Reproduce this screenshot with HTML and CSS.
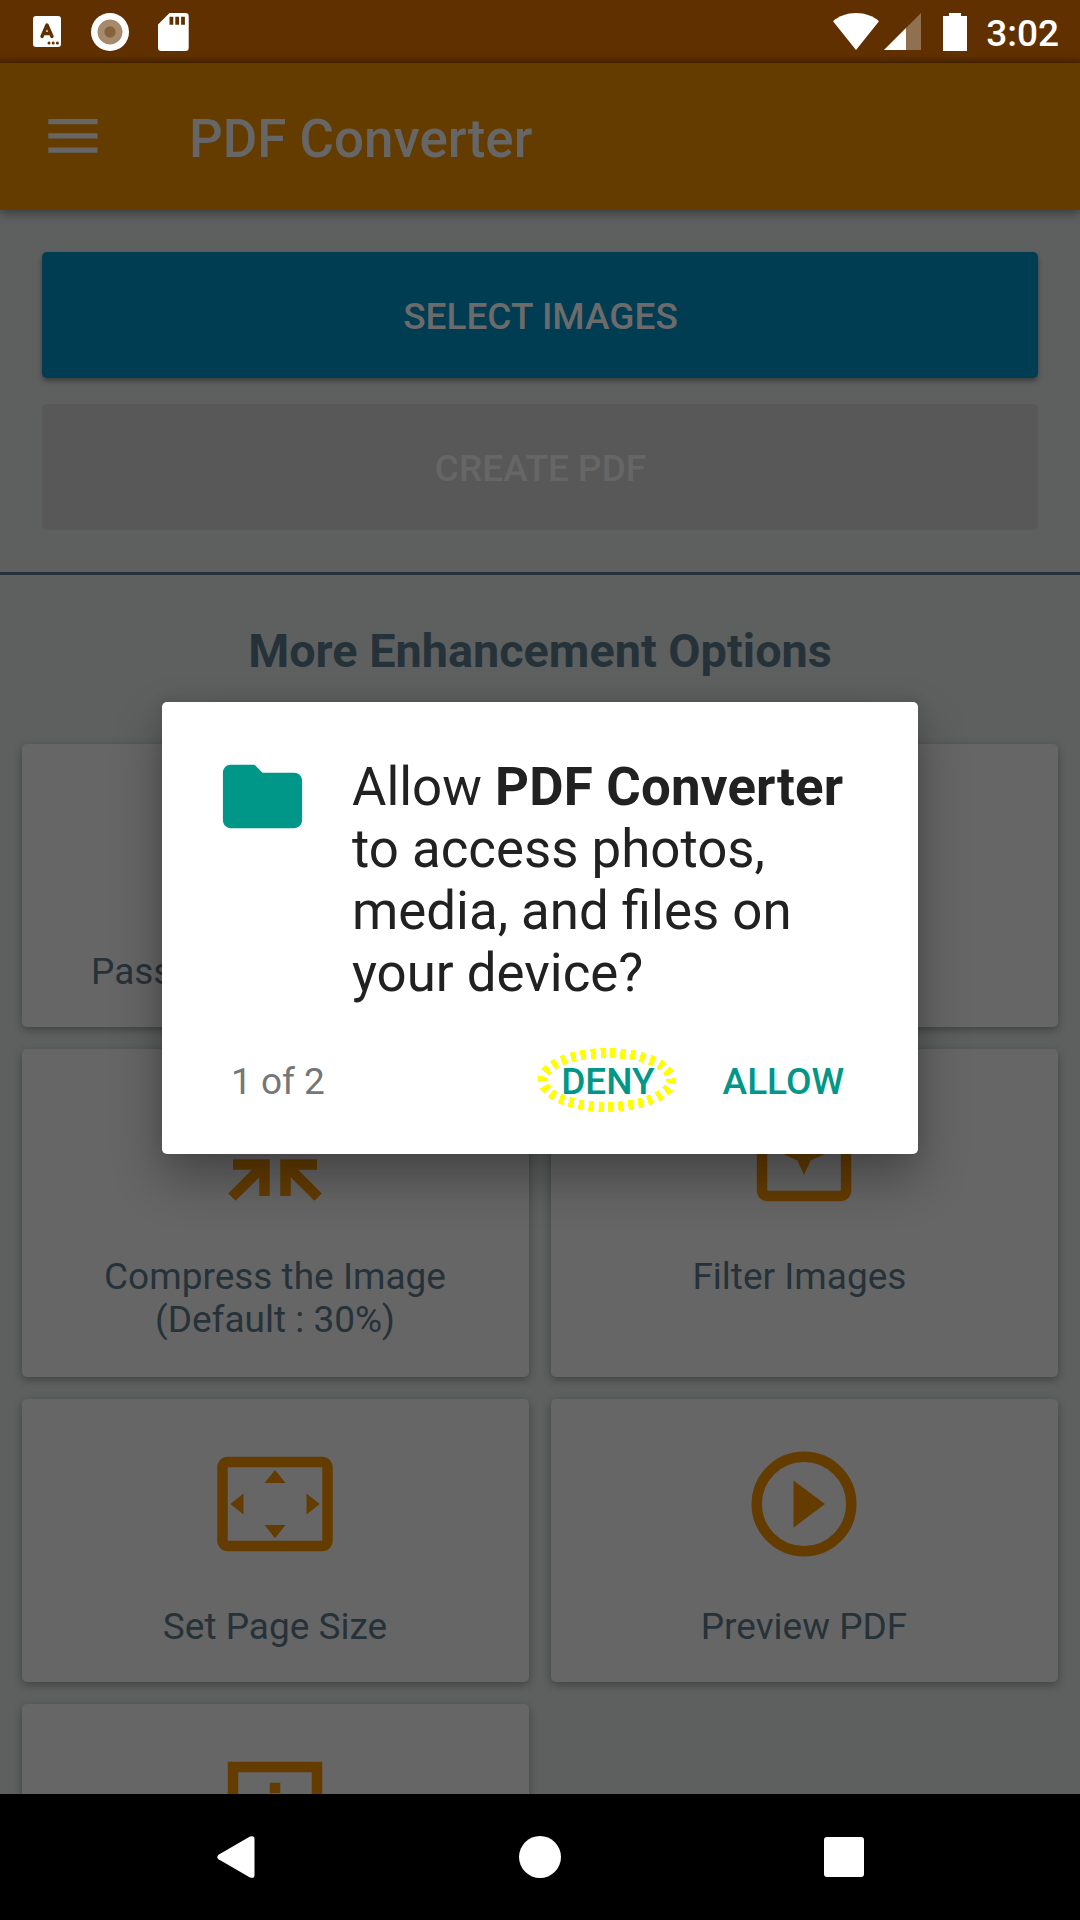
FILE: index.html
```html
<!DOCTYPE html>
<html lang="en">
<head>
<meta charset="utf-8">
<title>PDF Converter</title>
<link rel="stylesheet" href="styles.css">
</head>
<body>
<div class="screen">
  <header class="status-bar">
    <svg class="status-keyboard" width="28" height="31" viewBox="0 0 28 31"><rect width="28" height="31" rx="3" fill="#fff"/><path d="M9 20.500L14 9l5 11.500M10.500 17.500h7" fill="none" stroke="#603000" stroke-width="3.400" stroke-linecap="round" stroke-linejoin="round"/><g fill="#603000"><circle cx="16" cy="27" r="1.500"/><circle cx="20.200" cy="27" r="1.500"/><circle cx="24.400" cy="27" r="1.500"/></g></svg>
    <svg class="status-record" width="38" height="38" viewBox="0 0 38 38"><circle cx="19" cy="19" r="19" fill="#fff"/><circle cx="19" cy="19" r="12.500" fill="#a68a6d"/><circle cx="19" cy="19" r="5.700" fill="#87633b"/></svg>
    <svg class="status-sd" width="31" height="38" viewBox="0 0 31 38"><path fill="#fff" fill-rule="evenodd" d="M11.500 0H27.500a3.200 3.200 0 0 1 3.200 3.200V34.800a3.200 3.200 0 0 1-3.200 3.200H3.200A3.200 3.200 0 0 1 0 34.800V11.500zM11.500 3.700v8h3.800v-8zM17.300 3.700v8h3.800v-8zM23.100 3.700v8h3.800v-8z"/></svg>
    <span class="spacer"></span>
    <svg class="status-wifi" width="46" height="37" viewBox="0 0 46 37"><path fill="#fff" d="M0 8.200C6 3 14 0 23 0s17 3 23 8.200L23 37z"/></svg>
    <svg class="status-signal" width="37" height="37" viewBox="0 0 37 37"><path fill="#90704f" d="M37 0v37H0z"/><path fill="#fff" d="M22 15v22H0z"/></svg>
    <svg class="status-battery" width="24" height="38" viewBox="0 0 24 38"><path fill="#fff" d="M6 0h12v3h6v35H0V3h6z"/></svg>
    <span class="clock">3:02</span>
  </header>

  <div class="app-bar">
    <svg class="menu" width="50" height="34" viewBox="0 0 50 34" fill="#666"><path d="M.3 0h49.200v5.300H.3zM.3 14.200h49.200v5.300H.3zM.3 28.400h49.200v5.300H.3z"/></svg>
    <h1 class="app-title">PDF Converter</h1>
  </div>

  <main class="content">
    <div class="actions">
      <div class="button primary">SELECT IMAGES</div>
      <div class="button disabled">CREATE PDF</div>
    </div>
    <h2 class="section-title">More Enhancement Options</h2>
    <div class="cards">
      <div class="card"><span class="card-icon"></span><p class="label-start">Password</p></div>
      <div class="card"></div>
      <div class="card">
        <svg class="card-icon" viewBox="0 0 24 24"><path d="M19.500 3.090L15 7.590V4H13V11H20V9H16.410L20.910 4.500zM4.500 3.090L3.090 4.500 7.590 9H4V11H11V4H9V7.590zM4 13V15H7.590L3.090 19.500 4.500 20.910 9 16.410V20H11V13zM13 13V20H15V16.410L19.500 20.910 20.910 19.500 16.410 15H20V13z"/></svg>
        <p>Compress the Image<br>(Default : 30%)</p>
      </div>
      <div class="card">
        <svg class="card-icon" viewBox="0 0 24 24"><path d="M19.020 10v9H5V5h9V3H5.020c-1.100 0-2 .9-2 2v14c0 1.100.9 2 2 2H19c1.100 0 2-.9 2-2v-9zM17 10l.94-2.060L20 7l-2.060-.94L17 4l-.94 2.060L14 7l2.060.94zM13.250 10.750L12 8l-1.250 2.750L8 12l2.750 1.250L12 16l1.250-2.750L16 12z"/></svg>
        <p>Filter Images&nbsp;</p>
      </div>
      <div class="card">
        <svg class="card-icon" viewBox="0 0 24 24"><path fill-rule="evenodd" d="M12.010 5.500L10 8h4zM18 10v4l2.500-1.990zM6 10l-2.500 2.010L6 14zM14 16h-4l2.010 2.500zM21 3H3c-1.100 0-2 .9-2 2v14c0 1.100.9 2 2 2h18c1.100 0 2-.9 2-2V5c0-1.100-.9-2-2-2zM21 19.010H3V4.990h18z"/></svg>
        <p>Set Page Size</p>
      </div>
      <div class="card">
        <svg class="card-icon" viewBox="0 0 24 24"><path d="M10 16.500l6-4.500-6-4.500z"/><circle cx="12" cy="12" r="9" fill="none" stroke="#643c00" stroke-width="2"/></svg>
        <p>Preview PDF</p>
      </div>
      <div class="card">
        <svg class="card-icon" viewBox="0 0 24 24"><path fill-rule="evenodd" d="M3 3h18v18H3zM5 5v14h14V5zM11 7h2v2h-2z"/></svg>
      </div>
    </div>
  </main>

  <nav class="nav-bar">
    <svg width="38" height="42" viewBox="0 0 38 42"><path fill="#fff" d="M33 .6Q37.500-1 37.500 3V39q0 4-4.500 2.400L1.500 23.300Q-1 21 1.500 18.700z"/></svg>
    <svg width="42" height="42" viewBox="0 0 42 42"><circle cx="21" cy="21" r="21" fill="#fff"/></svg>
    <svg width="40" height="40" viewBox="0 0 40 40"><rect width="40" height="40" rx="3" fill="#fff"/></svg>
  </nav>

  <section class="dialog">
    <div class="dialog-body">
      <svg class="folder" viewBox="0 0 24 24"><path fill="#009688" d="M10 4H4c-1.100 0-2 .9-2 2v12c0 1.100.9 2 2 2h16c1.100 0 2-.9 2-2V8c0-1.100-.9-2-2-2h-8z"/></svg>
      <p class="message">Allow <b>PDF Converter</b><br>to access photos,<br>media, and files on<br>your device?</p>
    </div>
    <div class="dialog-footer">
      <span class="counter">1 of 2</span>
      <span class="choice deny">DENY
        <svg class="ring" width="140" height="66" viewBox="0 0 140 66"><ellipse cx="70" cy="33" rx="64.500" ry="27" pathLength="300" fill="none" stroke="#ff0" stroke-width="10" stroke-dasharray="5 5" stroke-dashoffset="1.500" shape-rendering="crispEdges"/></svg>
      </span>
      <span class="choice">ALLOW</span>
    </div>
  </section>
</div>
</body>
</html>
```
FILE: styles.css
```css
* { box-sizing: border-box; }
body { margin: 0; }
h1, h2, p { margin: 0; font-weight: 400; }
svg { display: block; flex: none; }

.screen {
  position: relative;
  display: flex;
  flex-direction: column;
  width: 1080px;
  height: 1920px;
  overflow: hidden;
  background: #5d605f;
  color: #263239;
  font-family: Roboto, sans-serif;
  font-size: 37px;
  line-height: 43px;
}

.status-bar {
  display: flex;
  flex: none;
  align-items: center;
  height: 63px;
  padding: 0 21px 0 33px;
  background: linear-gradient(#603000 56px, #4d2600 63px);
}
.status-record { margin-left: 30px; }
.status-sd { margin-left: 29px; }
.spacer { flex: 1; }
.status-signal { margin-left: 5px; }
.status-battery { margin: 0 19px 0 22px; }
.clock {
  padding-top: 4px;
  color: #fff;
  font-size: 37px;
  font-weight: 500;
}

.app-bar {
  position: relative;
  display: flex;
  flex: none;
  align-items: center;
  gap: 91px;
  height: 147px;
  padding-left: 48px;
  background: #643c00;
  box-shadow: 0 3px 10px rgba(0, 0, 0, 0.4);
}
.menu { margin-bottom: 2px; }
.app-title {
  padding-top: 5px;
  color: #666;
  font-size: 52.9px;
  font-weight: 500;
  line-height: 62px;
}

.content {
  flex: 1;
  min-height: 0;
  overflow: hidden;
}
.actions {
  display: flex;
  flex-direction: column;
  gap: 26px;
  padding: 42px;
  border-bottom: 3px solid #25323a;
}
.button {
  display: flex;
  align-items: center;
  justify-content: center;
  height: 126px;
  padding: 2px 0 0 1px;
  border-radius: 5px;
  font-weight: 500;
}
.primary {
  background: #003d52;
  color: #6b6b6b;
  box-shadow: 0 3px 5px rgba(0, 0, 0, 0.35);
}
.disabled { background: #585858; color: #666; }

.section-title {
  height: 169px;
  padding-top: 49px;
  font-size: 46.8px;
  font-weight: 700;
  line-height: 55px;
  text-align: center;
}
.cards {
  display: grid;
  grid-template-columns: 1fr 1fr;
  grid-template-rows: 283px 328px 283px 283px;
  gap: 22px;
  padding: 0 22px;
}
.card {
  display: flex;
  flex-direction: column;
  align-items: center;
  gap: 38px;
  padding: 42px 1px 0 0;
  border-radius: 5px;
  background: #666;
  box-shadow: 0 3px 8px rgba(0, 0, 0, 0.3);
  text-align: center;
}
.card-icon {
  width: 126px;
  height: 126px;
  fill: #643c00;
}
.label-start {
  align-self: flex-start;
  padding-left: 69px;
}

.nav-bar {
  position: relative;
  display: flex;
  flex: none;
  align-items: center;
  justify-content: space-between;
  height: 126px;
  padding: 0 216px 0 217px;
  background: #000;
}

.dialog {
  position: absolute;
  top: 702px;
  left: 162px;
  width: 756px;
  height: 452px;
  padding: 54px 53px 0;
  border-radius: 5px;
  background: #fff;
  box-shadow: 0 24px 50px rgba(0, 0, 0, 0.32), 0 0 16px rgba(0, 0, 0, 0.1);
}
.dialog-body { display: flex; gap: 42px; }
.folder {
  width: 95px;
  height: 95px;
  margin-top: -7px;
}
.message {
  color: #212121;
  font-size: 52.8px;
  line-height: 62px;
  white-space: nowrap;
}
.message b { font-weight: 700; letter-spacing: 0.2px; }
.dialog-footer {
  display: flex;
  gap: 68px;
  margin-top: 56px;
  padding: 0 21px 0 16px;
}
.counter { margin-right: auto; color: #767676; }
.choice { color: #009688; font-weight: 500; }
.deny { position: relative; }
.ring {
  position: absolute;
  top: -13px;
  left: -24px;
}
```
